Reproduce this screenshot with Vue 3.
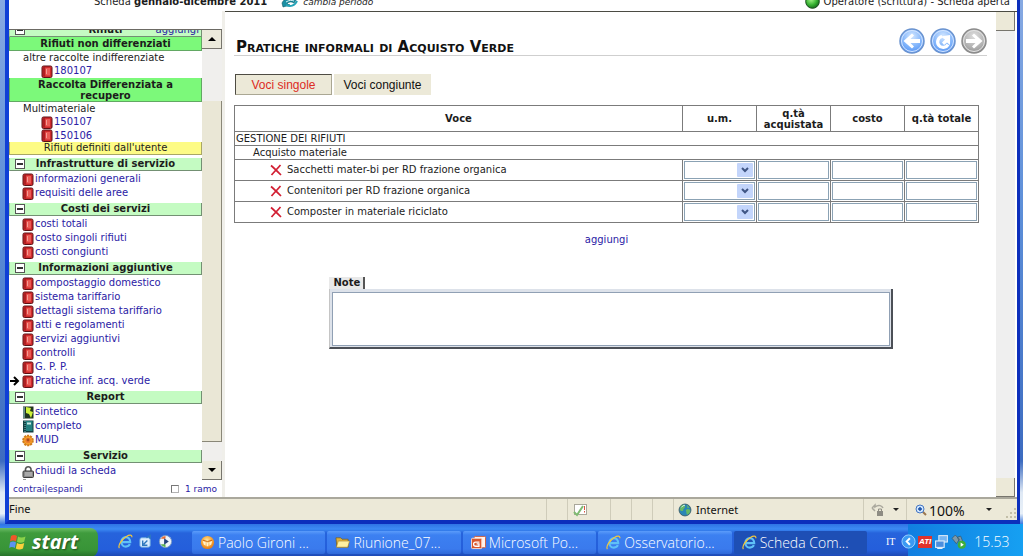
<script setup>
import { ref } from 'vue'

const sections = [
  { title: 'Infrastrutture di servizio', items: [
    { label: 'informazioni generali', icon: 'book' },
    { label: 'requisiti delle aree', icon: 'book' },
  ] },
  { title: 'Costi dei servizi', items: [
    { label: 'costi totali', icon: 'book' },
    { label: 'costo singoli rifiuti', icon: 'book' },
    { label: 'costi congiunti', icon: 'book' },
  ] },
  { title: 'Informazioni aggiuntive', items: [
    { label: 'compostaggio domestico', icon: 'book' },
    { label: 'sistema tariffario', icon: 'book' },
    { label: 'dettagli sistema tariffario', icon: 'book' },
    { label: 'atti e regolamenti', icon: 'book' },
    { label: 'servizi aggiuntivi', icon: 'book' },
    { label: 'controlli', icon: 'book' },
    { label: 'G. P. P.', icon: 'book' },
    { label: 'Pratiche inf. acq. verde', icon: 'book', current: true },
  ] },
  { title: 'Report', items: [
    { label: 'sintetico', icon: 'flash' },
    { label: 'completo', icon: 'notebook' },
    { label: 'MUD', icon: 'gear' },
  ] },
  { title: 'Servizio', items: [{ label: 'chiudi la scheda', icon: 'lock' }] },
]

const rows = [
  'Sacchetti mater-bi per RD frazione organica',
  'Contenitori per RD frazione organica',
  'Composter in materiale riciclato',
]

const tasks = [
  { label: 'Paolo Gironi ...', icon: 'orange' },
  { label: 'Riunione_07...', icon: 'folder' },
  { label: 'Microsoft Po...', icon: 'ppt' },
  { label: 'Osservatorio...', icon: 'ie' },
  { label: 'Scheda Com...', icon: 'ie', active: true },
]

const note = ref('')
const branch = ref(false)
</script>

<template>
  <div class="screen">
    <svg class="defs" width="0" height="0" aria-hidden="true">
      <defs>
        <radialGradient id="g-blue" cx="50%" cy="30%" r="75%">
          <stop offset="0" stop-color="#d3e7ff" /><stop offset="0.6" stop-color="#7db2fb" /><stop offset="1" stop-color="#4c8cf0" />
        </radialGradient>
        <radialGradient id="g-gray" cx="50%" cy="30%" r="75%">
          <stop offset="0" stop-color="#dedede" /><stop offset="0.6" stop-color="#b4b4b4" /><stop offset="1" stop-color="#8d8d8d" />
        </radialGradient>
        <radialGradient id="g-green" cx="40%" cy="35%" r="70%">
          <stop offset="0" stop-color="#a6f58a" /><stop offset="0.6" stop-color="#35b030" /><stop offset="1" stop-color="#14621a" />
        </radialGradient>
        <radialGradient id="g-orange" cx="45%" cy="35%" r="70%">
          <stop offset="0" stop-color="#ffe9a8" /><stop offset="0.5" stop-color="#fbad3c" /><stop offset="1" stop-color="#dd7213" />
        </radialGradient>
        <symbol id="i-book" viewBox="0 0 12 13">
          <rect x="1" y="1" width="10" height="11.500" rx="1.500" fill="#cf2a2c" stroke="#5b1114" />
          <path d="M3 2v9.500" stroke="#8c1518" /><path d="M4.500 3h4.500v7.500h-4.500z" fill="#ea5a54" /><path d="M5.500 4v5" stroke="#f79b94" />
        </symbol>
        <symbol id="i-flash" viewBox="0 0 12 13">
          <rect x="1" y="0.5" width="10.5" height="12" fill="#20351f" /><rect x="1" y="1" width="2" height="11" fill="#678b89" />
          <path d="M4 1l5 1-1 3 3 1-2 6-2-4-3-1z" fill="#cdf23a" />
        </symbol>
        <symbol id="i-notebook" viewBox="0 0 12 13">
          <rect x="1" y="0.5" width="10.5" height="12" fill="#123f42" /><path d="M3 1v11" stroke="#75bdb9" stroke-dasharray="1 1" />
          <rect x="4" y="1" width="6.5" height="10" fill="#22807f" /><rect x="5" y="2.5" width="4" height="2" fill="#c8ece6" />
        </symbol>
        <symbol id="i-gear" viewBox="0 0 12 13">
          <circle cx="6" cy="6.500" r="4.800" fill="#f7a52d" stroke="#d17c1c" stroke-width="2" stroke-dasharray="2.200 0.800" />
          <circle cx="6" cy="6.500" r="2.800" fill="#ee7c2b" /><circle cx="6" cy="6" r="1.400" fill="#a9501c" />
        </symbol>
        <symbol id="i-lock" viewBox="0 0 12 13">
          <path d="M3.500 7V4a2.800 2.800 0 0 1 5.500 0v3" fill="none" stroke="#555" stroke-width="1.600" />
          <rect x="1" y="6" width="10.500" height="6.500" rx="1" fill="#8b8b8b" stroke="#3c3c3c" /><path d="M3 8h7M3 10h7" stroke="#c8c8c8" />
        </symbol>
        <symbol id="i-ie" viewBox="0 0 16 16">
          <path d="M3.600 8.600H13c0-3-2-5.200-4.600-5.200S3.600 5.600 3.600 8.400s2 5 4.800 5c2 0 3.500-.9 4.300-2.600" fill="none" stroke="#5fc0f7" stroke-width="2.300" />
          <path d="M1.500 15C-.5 12.500 4 5.500 9 2.600c3-1.800 6-2 5.800.8" fill="none" stroke="#f2c63c" stroke-width="1.300" />
        </symbol>
        <symbol id="i-orange" viewBox="0 0 16 16">
          <circle cx="8" cy="8" r="7" fill="url(#g-orange)" /><path d="M3 6.500l3 1v4L4 10zM13 6.500l-3 1v4l2-1.500zM7 8h2v4H7z" fill="#fff2d0" /><path d="M3 5.500l5 1.500 5-1.500" fill="none" stroke="#c5600d" />
        </symbol>
        <symbol id="i-folder" viewBox="0 0 16 16">
          <path d="M1 3h5l1.500 1.500H14V13H2z" fill="#e0b13c" stroke="#6e5517" stroke-width="0.700" /><path d="M3.500 6.500H15.500L13.500 13H1.500z" fill="#fff0a2" stroke="#a98327" stroke-width="0.600" />
        </symbol>
        <symbol id="i-ppt" viewBox="0 0 16 16">
          <rect x="3.500" y="1.500" width="12" height="12" rx="1" fill="#fff3ec" stroke="#d35b35" />
          <rect x="0.500" y="3.500" width="11" height="11" rx="1" fill="#d9572d" stroke="#fbe0d3" />
          <path d="M9 7.500H5a2 2 0 0 0 0 4.500h3.500V9.500H6" fill="none" stroke="#fff" stroke-width="1.400" />
        </symbol>
        <symbol id="i-globe" viewBox="0 0 16 16">
          <circle cx="8" cy="8" r="6.800" fill="#2a86b5" stroke="#3c5c66" /><path d="M3 4c2-3 5-2 5 0s-2 2-2 4-3 1-4 0zM9 8c2-2 5-1 5 1s-3 5-4 4zM10 2l3 3-2 1z" fill="#67b963" /><path d="M4 5a5 5 0 0 1 4-2.500" fill="none" stroke="#d7f1ff" />
        </symbol>
      </defs>
    </svg>

    <div class="desktop">
      <div class="window">
        <header class="topbar">
          <span>Scheda <b>gennaio-dicembre 2011</b></span>
          <svg class="swap" viewBox="0 0 18 12" aria-hidden="true">
            <path d="M1 7c2-5 10-8 15-4l-3 4c-3-2-6-1-7 1l3 1-7 2z" fill="#1b8fa3" stroke="#0c5764" stroke-width="0.600" /><path d="M5 9c4 2 9 1 11-4" fill="none" stroke="#24a4b8" stroke-width="2" /><path d="M5 6c3-2 6-2 8-1" fill="none" stroke="#d8f3f6" />
          </svg>
          <a href="#" class="period">cambia periodo</a>
          <svg class="ball" viewBox="0 0 15 15" aria-hidden="true"><circle cx="7.500" cy="7.500" r="6.800" fill="url(#g-green)" stroke="#184c1c" /></svg>
          <span>Operatore (scrittura) - Scheda aperta</span>
        </header>

        <div class="body">
          <aside class="side">
            <div class="side-view">
              <nav class="tree">
                <div class="sec first"><button class="toggle" aria-label="Contrai Rifiuti"></button><span>Rifiuti</span><a href="#" class="add">aggiungi</a></div>
                <div class="sec bright">Rifiuti non differenziati</div>
                <div class="group">altre raccolte indifferenziate</div>
                <a href="#" class="item deep"><svg><use href="#i-book" /></svg>180107</a>
                <div class="sec bright two">Raccolta Differenziata a recupero</div>
                <div class="group">Multimateriale</div>
                <a href="#" class="item deep"><svg><use href="#i-book" /></svg>150107</a>
                <a href="#" class="item deep"><svg><use href="#i-book" /></svg>150106</a>
                <div class="sec yellow">Rifiuti definiti dall'utente</div>
                <section v-for="s in sections" :key="s.title">
                  <div class="sec"><button class="toggle" :aria-label="'Contrai ' + s.title"></button><span>{{ s.title }}</span></div>
                  <a v-for="i in s.items" :key="i.label" href="#" class="item">
                    <svg v-if="i.current" class="here" viewBox="0 0 10 10" aria-hidden="true"><path d="M0 5h7M4 1l4 4-4 4" fill="none" stroke="#000" stroke-width="2" /></svg>
                    <svg><use :href="'#i-' + i.icon" /></svg>{{ i.label }}
                  </a>
                </section>
                <a href="#" class="item" aria-label="Altro servizio"><svg viewBox="0 0 12 13"><path d="M1 3V1h3M6 3l2-2 2 2v9H2V5" fill="none" stroke="#333" /></svg></a>
              </nav>
              <div class="scroll">
                <button aria-label="Scorri in alto"><svg viewBox="0 0 8 4"><path d="M0 4l4-4 4 4z" /></svg></button>
                <span class="gap-top"></span><span class="thumb"></span><span class="gap-bottom"></span>
                <button aria-label="Scorri in basso"><svg viewBox="0 0 8 4"><path d="M0 0l4 4 4-4z" /></svg></button>
              </div>
            </div>
            <div class="side-foot">
              <span><a href="#">contrai</a>|<a href="#">espandi</a></span>
              <label><input v-model="branch" type="checkbox" />1 ramo</label>
            </div>
          </aside>

          <main class="main">
            <div class="page">
              <div class="heading">
                <h1>Pratiche informali di Acquisto Verde</h1>
                <div class="nav">
                  <button aria-label="Indietro"><svg viewBox="0 0 26 26"><circle cx="13" cy="13" r="12" fill="url(#g-blue)" stroke="#6a93cf" stroke-width="1.500" /><circle cx="13" cy="13" r="10.500" fill="none" stroke="#d5e6ff" /><path d="M4.500 13L13 5.500l2 2-3.500 3.500H21v4h-9.500l3.500 3.500-2 2z" fill="#fff" /></svg></button>
                  <button aria-label="Ricarica"><svg viewBox="0 0 26 26"><circle cx="13" cy="13" r="12" fill="url(#g-blue)" stroke="#6a93cf" stroke-width="1.500" /><circle cx="13" cy="13" r="10.500" fill="none" stroke="#d5e6ff" /><path d="M12 8.500a5.500 5.500 0 1 0 6 8" fill="none" stroke="#fff" stroke-width="3.200" /><path d="M10.500 8.500L20 7v10l-3-2.500-3 2.500-2-2.500 3-3z" fill="#fff" /></svg></button>
                  <button aria-label="Avanti"><svg viewBox="0 0 26 26"><circle cx="13" cy="13" r="12" fill="url(#g-gray)" stroke="#8b8b8b" stroke-width="1.500" /><circle cx="13" cy="13" r="10.500" fill="none" stroke="#e4e4e4" /><path d="M21.500 13L13 5.500l-2 2 3.500 3.500H5v4h9.500L11 18.500l2 2z" fill="#fff" /></svg></button>
                </div>
              </div>
              <div class="tabs">
                <button class="tab on">Voci singole</button>
                <button class="tab">Voci congiunte</button>
              </div>
              <div class="sheet">
                <table>
                  <colgroup><col /><col class="num" /><col class="num" /><col class="num" /><col class="num" /></colgroup>
                  <thead>
                    <tr><th>Voce</th><th>u.m.</th><th>q.tà acquistata</th><th>costo</th><th>q.tà totale</th></tr>
                  </thead>
                  <tbody>
                    <tr class="cat"><td colspan="5">GESTIONE DEI RIFIUTI</td></tr>
                    <tr class="cat sub"><td colspan="5">Acquisto materiale</td></tr>
                    <tr v-for="r in rows" :key="r" class="row">
                      <td>
                        <div class="voce">
                          <button class="del" :aria-label="'Elimina ' + r"><svg viewBox="0 0 12 12"><path d="M1 1.500C4 4 8 8 11 11M10.500 1C8 4 4 8 1.500 11" fill="none" stroke="#d21f33" stroke-width="1.700" /></svg></button>
                          {{ r }}
                        </div>
                      </td>
                      <td>
                        <div class="pick">
                          <select :aria-label="'u.m. ' + r"><option></option></select>
                          <svg viewBox="0 0 16 14" aria-hidden="true"><rect width="16" height="14" rx="1" fill="#c3d5fb" /><path d="M5 5l3 3 3-3" fill="none" stroke="#3f5584" stroke-width="2" /></svg>
                        </div>
                      </td>
                      <td><input type="text" :aria-label="'q.tà acquistata ' + r" /></td>
                      <td><input type="text" :aria-label="'costo ' + r" /></td>
                      <td><input type="text" :aria-label="'q.tà totale ' + r" /></td>
                    </tr>
                  </tbody>
                </table>
                <a href="#" class="more">aggiungi</a>
              </div>
              <div class="note">
                <label for="note">Note</label>
                <div class="note-box"><textarea id="note" v-model="note"></textarea></div>
              </div>
            </div>
            <div class="main-scroll"><span></span><span></span></div>
          </main>
        </div>

        <footer class="status">
          <span class="fine">Fine</span>
          <span class="cell"></span>
          <span class="cell badge"><svg class="s14" viewBox="0 0 14 14" aria-hidden="true"><rect x="1.500" y="1.500" width="12" height="10" fill="#fff" stroke="#a9a79a" /><path d="M1 9l3 3 6-9" fill="none" stroke="#7fbb72" stroke-width="2" /><path d="M11.500 3v4M11.500 8v1.500" stroke="#d8523f" /></svg></span>
          <span class="cell"></span><span class="cell"></span><span class="cell"></span>
          <span class="cell zone"><svg class="s14" aria-hidden="true"><use href="#i-globe" /></svg>Internet</span>
          <span class="cell safe"><svg class="s14" viewBox="0 0 14 14" aria-hidden="true"><path d="M1 5l3-3v2c4-3 7-1 8 1M1 5l3 3" fill="none" stroke="#aaa89d" stroke-width="1.500" /><rect x="6" y="8" width="6" height="5" fill="#8e8c84" /><path d="M7.500 8V6h3v2" fill="none" stroke="#8e8c84" /></svg><i class="caret"></i></span>
          <span class="cell zoomer"><svg class="s12" viewBox="0 0 12 12" aria-hidden="true"><path d="M7 7l4 4" stroke="#9b7650" stroke-width="2" /><circle cx="5" cy="5" r="4" fill="#cfe6ff" stroke="#4576c2" /><path d="M3 5h4M5 3v4" stroke="#174ca3" stroke-width="1.400" /></svg><span class="pct">100%</span><i class="caret"></i><svg class="s12 grip" viewBox="0 0 12 12" aria-hidden="true"><path d="M9 1h2v2H9zM5 5h2v2H5zM9 5h2v2H9zM1 9h2v2H1zM5 9h2v2H5zM9 9h2v2H9z" fill="#c3bfa8" /></svg></span>
        </footer>
      </div>
    </div>

    <div class="taskbar">
      <button class="start">
        <svg viewBox="0 0 18 18" aria-hidden="true"><path d="M2 3c2-1.500 4-1.500 6 0L7 8.500c-2-1.300-4-1.300-6 0z" fill="#f0572a" /><path d="M9 3.500c2 1.300 5 1.200 7.500 0l-1.300 5.300C13 10 10 10 8 8.800z" fill="#8ad24a" /><path d="M1 9.500c2-1.300 4-1.300 6 0L5.800 15c-2-1.300-4-1.300-5.600 0z" fill="#5b93f2" /><path d="M8 10c2 1.300 5 1.200 7.200 0L14 15.500c-2.500 1.200-5 1.200-7.200 0z" fill="#fcd03c" /></svg>
        start
      </button>
      <div class="quick">
        <svg aria-hidden="true"><use href="#i-ie" /></svg>
        <svg viewBox="0 0 16 16" aria-hidden="true"><rect x="2" y="4" width="11" height="10" rx="2" fill="#dceefe" stroke="#6aa7df" /><path d="M9 4l4-2.500V5M10 7L6 11M5 7v5h5" fill="none" stroke="#2e78bd" stroke-width="1.500" /></svg>
        <svg viewBox="0 0 16 16" aria-hidden="true"><circle cx="8" cy="8" r="6.500" fill="#eef3fb" stroke="#7799c4" /><path d="M3 5a6 6 0 0 1 5-3v3z" fill="#e76a32" /><path d="M3 11a6 6 0 0 0 5 3v-3z" fill="#57b04a" /><path d="M6.500 4.500l5 3.500-5 3.500z" fill="#23407a" /></svg>
      </div>
      <div class="tasks">
        <button v-for="t in tasks" :key="t.label" class="task" :class="{ active: t.active }"><svg aria-hidden="true"><use :href="'#i-' + t.icon" /></svg><span>{{ t.label }}</span></button>
      </div>
      <div class="lang">IT</div>
      <div class="tray">
        <button class="chev" aria-label="Mostra icone nascoste"><svg viewBox="0 0 16 16"><circle cx="8" cy="8" r="7" fill="#3b9af3" stroke="#9dd2ff" /><path d="M9.500 4.500L6 8l3.500 3.500" fill="none" stroke="#fff" stroke-width="2" /></svg></button>
        <span class="ati">ATI</span>
        <svg viewBox="0 0 14 14" aria-hidden="true"><rect x="4.500" y="1.500" width="8" height="6" fill="#78b6f2" stroke="#d9e9f8" /><rect x="1.500" y="6.500" width="8" height="6" fill="#4b8ede" stroke="#e4effa" /><path d="M3 13.500h5" stroke="#e4effa" /></svg>
        <svg class="plug" viewBox="0 0 14 14" aria-hidden="true"><path d="M1 4l3-3 4 4-3 4zM6 3l3-1 2 5-2 3z" fill="#7e9aa9" stroke="#37596c" stroke-width="0.700" /><circle cx="10" cy="10" r="3.800" fill="#3fae3a" /><path d="M9 8l3 2-3 2z" fill="#fff" /></svg>
        <span class="clock">15.53</span>
      </div>
    </div>
  </div>
</template>

<style>
html, body { margin: 0; }
</style>

<style scoped>
* { box-sizing: border-box; }
.screen { min-height: 100vh; display: flex; flex-direction: column; overflow: hidden; font: 10px/12px "DejaVu Sans", Verdana, sans-serif; color: #1c1c1c; }
.defs { position: absolute; }
button { font: inherit; color: inherit; padding: 0; border: 0; background: none; }
a { color: #2a21a5; text-decoration: none; }
svg { flex: none; display: block; }

.desktop { flex: 1; display: flex; padding: 0 3px 0 5px; background: linear-gradient(#86a9e2, #5d8fd8 40%, #3d6cc0 88%, #dfe9f5 94%, #e8f0f8 98%, #3c7ae0); }
.window { flex: 1; min-width: 0; display: flex; flex-direction: column; background: #fff; border: 4px solid #0c2fbc; border-top: 0; border-left-color: #0f3fd6; border-right-width: 3px; }

.topbar { height: 11px; overflow: hidden; display: flex; align-items: flex-end; padding: 0 7px 3px 85px; }
.topbar > span { white-space: nowrap; }
.swap { width: 18px; height: 12px; margin-left: 14px; }
.period { margin-left: 4px; color: #222; font-size: 9px; font-style: italic; }
.ball { width: 15px; height: 15px; margin: 0 4px -1px auto; }

.body { flex: 1; display: flex; border-bottom: 2px solid #aaa89c; }
.side { width: 216px; flex: none; display: flex; flex-direction: column; padding-top: 18px; border-right: 3px solid #f0efea; }
.side-view { flex: 1; display: flex; height: 451px; overflow: hidden; border-top: 1px solid #6c6a64; }
.tree { flex: 1; min-width: 0; height: 450px; overflow: hidden; }
.tree section { margin-top: 3px; }
.sec { position: relative; height: 13px; line-height: 12px; margin-bottom: 1px; text-align: center; font-weight: bold; background: #c4fbc2; border-right: 1px solid #739073; border-bottom: 1px solid #739073; border-left: 1px solid #a5cfa3; white-space: nowrap; }
.sec.first { height: 7px; margin: 0; display: flex; justify-content: center; align-items: flex-end; overflow: hidden; }
.sec.first .add { position: absolute; right: 2px; font-weight: normal; }
.sec.bright { background: #7cf97a; margin: 0; height: 14px; line-height: 14px; border-color: #62a863; }
.sec.two { height: 24px; line-height: 11px; white-space: normal; padding: 1px 20px 0; }
.sec.yellow { background: #fdfb85; border-color: #a9a765; margin: 0; font-weight: normal; }
.toggle { position: absolute; left: 5px; top: 1px; width: 10px; height: 10px; background: linear-gradient(#333, #333) center / 6px 2px no-repeat #fff; border: 1px solid #555; }
.first .toggle { top: -5px; }
.group { height: 13px; line-height: 13px; padding-left: 14px; }
.item { position: relative; display: flex; align-items: center; gap: 1px; height: 14px; padding-left: 13px; white-space: nowrap; }
.item svg { width: 12px; height: 13px; }
.item.deep { padding-left: 32px; height: 14px; line-height: 12px; }
.item.deep + .item.deep { height: 13px; }
.item .here { position: absolute; left: 1px; width: 10px; height: 10px; }
.scroll { width: 20px; flex: none; display: flex; flex-direction: column; background: #f0efed; }
.scroll button { height: 19px; display: grid; place-items: center; background: #eceadb; border-right: 1px solid #77756d; border-bottom: 1px solid #77756d; }
.scroll button svg { width: 8px; height: 4px; }
.gap-top { height: 52px; }
.thumb { flex: 1; background: #eae7d6; border-right: 1px solid #8a8778; border-bottom: 1px solid #8a8778; }
.gap-bottom { height: 19px; }
.side-foot { height: 17px; display: flex; justify-content: space-between; align-items: center; padding: 1px 5px 0 4px; font-size: 9px; color: #2a21a5; }
.side-foot label { display: flex; align-items: center; gap: 6px; }
.side-foot input { appearance: none; width: 8px; height: 8px; margin: 0; border: 1px solid #b3b3b3; border-top-color: #777; border-left-color: #777; background: #fff; }

.main { flex: 1; min-width: 0; display: flex; border-top: 1px solid #4b4b43; padding-right: 2px; }
.page { flex: 1; min-width: 0; padding: 14px 9px 0; }
.heading { display: flex; justify-content: space-between; align-items: center; height: 30px; border-bottom: 1px solid #cfcfcf; padding: 2px 0 1px 2px; }
h1 { margin: 0; font: bold small-caps 15px/18px "DejaVu Sans", sans-serif; color: #111; padding-top: 12px; white-space: nowrap; }
.nav { display: flex; gap: 5px; }
.nav button, .nav svg { width: 26px; height: 26px; }
.tabs { display: flex; gap: 2px; margin: 18px 0 10px 1px; }
.tab { width: 97px; height: 21px; background: #ece9d8; font: 12px/18px "Liberation Sans", Arial, sans-serif; color: #111; }
.tab.on { color: #dc2b24; border: 1px solid #aaa793; border-top-color: #4e4c43; border-left-color: #4e4c43; }
.sheet { margin-right: 8px; display: flex; flex-direction: column; align-items: center; }
table { width: 100%; table-layout: fixed; border-collapse: collapse; }
.num { width: 74px; }
th, td { border: 1px solid #7b7b7b; padding: 0; }
th { height: 26px; line-height: 11px; padding: 1px 5px; }
.cat td { height: 14px; line-height: 12px; padding-left: 1px; }
.cat.sub td { padding-left: 18px; }
.row td { height: 21px; padding: 1px; }
.voce { display: flex; align-items: center; gap: 5px; padding-left: 34px; }
.del, .del svg { width: 12px; height: 12px; }
td input, select { display: block; width: 100%; height: 18px; margin: 0; padding: 0 2px; background: #fff; border: 1px solid #8ba2b4; border-radius: 0; appearance: none; font: inherit; }
.pick { position: relative; }
.pick svg { position: absolute; right: 2px; top: 2px; width: 16px; height: 14px; pointer-events: none; }
.more { margin-top: 11px; }
.note { width: 564px; max-width: 100%; margin: 31px auto 0; }
.note label { display: inline-block; height: 12px; padding: 0 3px 0 5px; font-weight: bold; background: #e9e9e9; border-right: 2px solid #555; vertical-align: top; }
.note-box { background: #dde2ea; border-left: 1px solid #c5c5c5; border-right: 2px solid #4c5057; border-bottom: 2px solid #4c5057; padding: 3px 1px 1px 2px; }
textarea { display: block; width: 100%; height: 54px; border: 1px solid #90a0b4; background: #fff; resize: none; margin: 0; font: inherit; }
.main-scroll { width: 19px; display: flex; flex-direction: column; justify-content: space-between; background: #efefef; }
.main-scroll span { height: 19px; background: #ece9d8; border-right: 1px solid #77756d; border-bottom: 1px solid #77756d; }

.status { height: 21px; display: flex; background: #ece9d8; font: 11px/20px "Noto Sans", sans-serif; color: #111; }
.fine { flex: 1; }
.cell { width: 21px; display: flex; align-items: center; justify-content: center; border-left: 1px solid #cfccba; }
.badge { width: 43px; justify-content: flex-start; padding-left: 5px; }
.zone { width: 190px; justify-content: flex-start; gap: 4px; padding-left: 4px; }
.safe { width: 43px; gap: 8px; }
.zoomer { width: 111px; justify-content: flex-start; padding-left: 8px; }
.pct { font-size: 14px; margin-left: 2px; width: 57px; padding-top: 3px; }
.s14 { width: 14px; height: 14px; }
.s12 { width: 12px; height: 12px; }
.grip { margin: 6px 0 0 auto; }
.caret { border: 3px solid transparent; border-top-color: #222; border-bottom: 0; }

.taskbar { height: 33px; display: flex; align-items: stretch; background: linear-gradient(#2f74e4, #3c8bf4 5px, #2663dc 9px, #245edb 26px, #1c46ae); color: #fff; }
.start { width: 98px; margin-top: 4px; display: flex; align-items: center; gap: 5px; padding: 0 0 1px 9px; background: linear-gradient(#6cbd67, #3f9b3d 5px, #389437 22px, #256e28); border-radius: 0 8px 8px 0; font: italic bold 20px/22px "Open Sans", sans-serif; text-shadow: 1px 1px 2px #1c481c; }
.start svg { width: 18px; height: 18px; }
.quick { width: 94px; display: flex; align-items: center; gap: 5px; padding: 2px 0 0 20px; }
.quick svg { width: 15px; height: 15px; }
.tasks { flex: 1; min-width: 0; display: flex; gap: 2px; padding: 7px 0 3px; }
.task { flex: 1; min-width: 0; display: flex; align-items: center; gap: 3px; padding-left: 8px; background: linear-gradient(#5b9cfa, #3c80f1 4px, #3a7aed 18px, #2f68d8); border-radius: 2px; font: 300 14px/20px "Open Sans", "Noto Sans", sans-serif; white-space: nowrap; overflow: hidden; }
.task svg { width: 15px; height: 15px; }
.task.active { background: #1e4fb5; }
.lang { width: 34px; padding: 11px 0 0 19px; font: 10px/14px "Liberation Serif", serif; }
.tray { width: 122px; display: flex; align-items: center; gap: 2px; background: linear-gradient(90deg, transparent 7px, #117ee0 7px, #16a0f2); padding-top: 2px; }
.chev, .chev svg { width: 15px; height: 15px; }
.tray > svg { width: 15px; height: 15px; }
.ati { background: #e0332c; font: italic bold 8px/12px "Liberation Sans", sans-serif; padding: 0 1px; }
.clock { margin-left: 6px; font: 300 14px/18px "Open Sans", sans-serif; }
</style>
